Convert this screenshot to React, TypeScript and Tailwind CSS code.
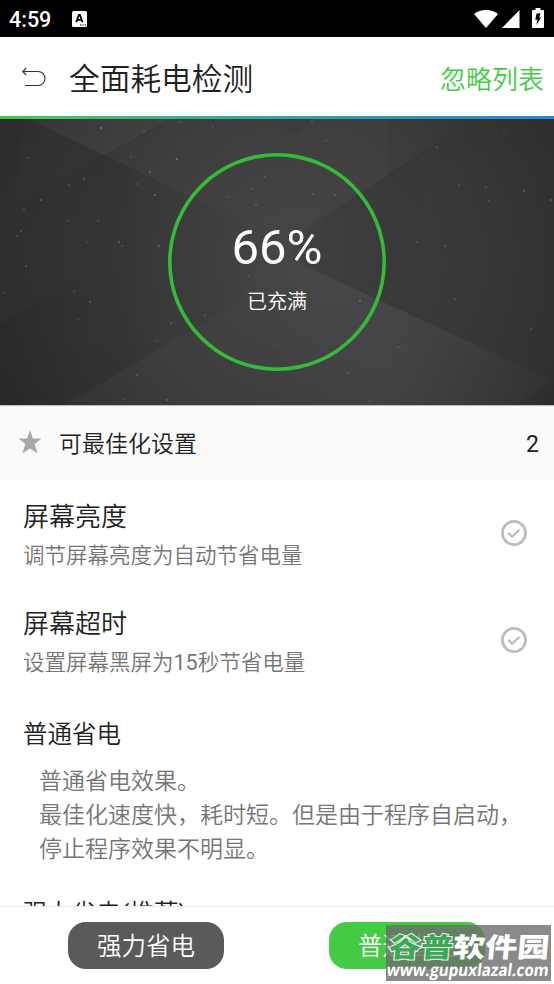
type Setting = {
  id: number;
  title: string;
  description: string;
};

const settings: Setting[] = [
  { id: 1, title: "屏幕亮度", description: "调节屏幕亮度为自动节省电量" },
  { id: 2, title: "屏幕超时", description: "设置屏幕黑屏为15秒节省电量" },
];

// x, y, opacity of the dust specks in the hero background
const specks = [
  [101, 9, 0.5], [177, 40, 0.5], [150, 53, 0.35], [84, 60, 0.35], [155, 76, 0.4],
  [41, 81, 0.4], [24, 91, 0.3], [28, 39, 0.25], [69, 66, 0.25], [131, 38, 0.25],
  [137, 65, 0.25], [119, 123, 0.4], [122, 127, 0.25], [159, 127, 0.4], [21, 112, 0.3],
  [17, 117, 0.25], [98, 102, 0.25], [68, 102, 0.2], [87, 123, 0.2], [26, 147, 0.3],
  [4, 174, 0.2], [74, 172, 0.2], [90, 183, 0.3], [171, 204, 0.3], [157, 222, 0.2],
  [137, 256, 0.3], [167, 281, 0.3], [124, 280, 0.2], [78, 200, 0.2], [249, 157, 0.2],
  [312, 3, 0.3], [326, 22, 0.2], [313, 75, 0.25], [335, 76, 0.35], [360, 182, 0.4],
  [348, 254, 0.3], [398, 228, 0.25], [404, 233, 0.2], [417, 123, 0.25], [445, 127, 0.3],
  [455, 180, 0.25], [524, 72, 0.4], [486, 68, 0.25], [489, 82, 0.25], [459, 66, 0.2],
  [551, 81, 0.3], [437, 28, 0.25], [504, 12, 0.2], [531, 210, 0.25], [252, 70, 0.25],
  [256, 86, 0.3], [265, 58, 0.25], [229, 78, 0.2], [205, 196, 0.25], [277, 226, 0.15],
  [304, 265, 0.2], [370, 282, 0.2], [213, 8, 0.2], [180, 3, 0.25], [144, 12, 0.25],
];

const AndroidStatusBar = () => (
  <div className="flex h-[37px] shrink-0 items-center bg-black pl-[9px] pr-[10px] text-white">
    <span className="pt-[2px] font-[Roboto] text-[21.5px] font-medium leading-[37px]">4:59</span>
    <svg className="ml-[21px]" width="15" height="16" viewBox="0 0 15 16">
      <rect width="15" height="16" rx="1.5" fill="#fff" />
      <path d="M4.2 11.2 6.9 4h1L10.6 11.2M5.3 8.9h4.2" fill="none" stroke="#000" strokeWidth="1.8" />
      <path d="M8 14h1.3M10.3 14h1.3M12.6 14H14" stroke="#000" strokeWidth="1.2" />
    </svg>
    <svg className="ml-auto" width="24" height="18" viewBox="0 0 24 18">
      <path d="M0 4C6.5-1.3 17.5-1.3 24 4L12 18Z" fill="#fff" />
    </svg>
    <svg className="ml-[4px]" width="18" height="18" viewBox="0 0 18 18">
      <path d="M17.5 0v18H0Z" fill="#fff" />
    </svg>
    <svg className="mb-[1px] ml-[12px]" width="12" height="20" viewBox="0 0 12 20">
      <path d="M3.5 0h5v2H11q1 0 1 1v16q0 1-1 1H1q-1 0-1-1V3q0-1 1-1h2.5Z" fill="#fff" />
      <path d="M4.5 5.5h4L7.3 9.5H9L4.5 17l.9-5.2H3.3Z" fill="#000" />
    </svg>
  </div>
);

const HeroBackground = () => (
  <svg
    className="absolute inset-0"
    width="554"
    height="286"
    viewBox="0 0 554 286"
  >
    <defs>
      <radialGradient id="glow" gradientUnits="userSpaceOnUse" cx="300" cy="140" r="320">
        <stop offset="0" stopColor="#464647" />
        <stop offset="0.5" stopColor="#3e3e3f" />
        <stop offset="1" stopColor="#2e2e2f" />
      </radialGradient>
      <linearGradient id="rightShade" x1="0" x2="1">
        <stop offset="0" stopColor="#000" stopOpacity="0.06" />
        <stop offset="0.35" stopColor="#000" stopOpacity="0.12" />
        <stop offset="1" stopColor="#000" stopOpacity="0.05" />
      </linearGradient>
      <linearGradient id="leftShade" gradientUnits="userSpaceOnUse" x1="0" x2="270" y1="0" y2="0">
        <stop offset="0" stopColor="#000" stopOpacity="0.03" />
        <stop offset="0.45" stopColor="#000" stopOpacity="0.12" />
        <stop offset="1" stopColor="#000" stopOpacity="0" />
      </linearGradient>
      <linearGradient id="bottomLight" x1="0" x2="1" y1="0" y2="0">
        <stop offset="0" stopColor="#b0c0e0" stopOpacity="0" />
        <stop offset="0.4" stopColor="#b0c0e0" stopOpacity="0.035" />
        <stop offset="1" stopColor="#b0c0e0" stopOpacity="0" />
      </linearGradient>
      <linearGradient id="lowerFold" gradientUnits="userSpaceOnUse" x1="0" x2="100" y1="0" y2="0">
        <stop offset="0" stopColor="#000" stopOpacity="0.08" />
        <stop offset="1" stopColor="#000" stopOpacity="0" />
      </linearGradient>
    </defs>
    <rect width="554" height="286" fill="url(#glow)" />
    <path d="M28 0 270 115 240 182 65 286H0V0Z" fill="url(#leftShade)" />
    <path d="M28 0H170L103 36Z" fill="#fff" opacity="0.03" />
    <path d="M0 95 103 36 28 0H24L14 86Z" fill="#fff" opacity="0.012" />
    <path d="M0 205 95 150V230L65 286H0Z" fill="url(#lowerFold)" />
    <path d="M475 0 310 106 290 140 554 262V0Z" fill="url(#rightShade)" />
    <path d="M387 0H475L388 58Z" fill="#000" opacity="0.04" />
    <path d="M275 0H312L292 18Z" fill="#000" opacity="0.05" />
    <path d="M290 140 554 262V286H270Z" fill="url(#bottomLight)" />
    <path d="M515 286 554 261V286Z" fill="#000" opacity="0.07" />
    {specks.map(([x, y, opacity], idx) => (
      <circle key={idx} cx={x} cy={y} r="0.9" fill="#fff" opacity={opacity * 0.65} />
    ))}
  </svg>
);

const CheckCircle = () => (
  <svg className="mb-[2px]" width="26" height="26" viewBox="0 0 26 26" fill="none" stroke="#bcbcbc">
    <circle cx="13" cy="13" r="11.6" strokeWidth="2.7" />
    <path d="m7.4 12.8 3.7 4 7.4-7.1" strokeWidth="2.2" />
  </svg>
);

const Watermark = () => (
  <div className="absolute left-[386px] top-[18px] h-14 w-[165px] bg-[#6d6d6d]/80">
    <svg width="165" height="56" viewBox="0 0 165 56">
      <g
        fontFamily="'Noto Sans CJK SC', sans-serif"
        fontSize="27"
        fontWeight="900"
        transform="translate(2 32) skewX(-5) scale(1.19 1)"
      >
        <text fill="#3fa757" stroke="#e4f5e6" strokeWidth="2" paintOrder="stroke">
          谷普
        </text>
        <text x="54" fill="#fff">
          软件园
        </text>
      </g>
      <text
        transform="translate(0 51) skewX(-8)"
        textLength="162"
        lengthAdjust="spacingAndGlyphs"
        fontFamily="'Open Sans', sans-serif"
        fontSize="17"
        fontWeight="700"
        fill="#fff"
      >
        www.gupuxlazal.com
      </text>
    </svg>
  </div>
);

const App = () => {
  return (
    <div className="flex h-[984px] w-[554px] flex-col overflow-hidden bg-white font-[Roboto,'Noto_Sans_CJK_SC_DemiLight','Noto_Sans_CJK_SC',sans-serif] text-[#212121]">
      <AndroidStatusBar />

      {/* Title bar */}
      <header className="flex h-[79px] shrink-0 items-center pl-[22px] pr-[10px]">
        <svg width="24" height="20" viewBox="0 0 24 20" fill="none" stroke="#333" strokeWidth="1.1">
          <path d="M.7 4.5H16a7 7 0 0 1 0 14H3M4.2 1 .7 4.5 4.2 8" />
        </svg>
        <h1 className="ml-[23px] pt-[7px] text-[30.7px] leading-[40px]">全面耗电检测</h1>
        <button className="ml-auto pt-[6px] text-[26px] leading-[40px] text-[#43cc43]">忽略列表</button>
      </header>
      <div className="h-[3px] shrink-0 bg-linear-to-r from-[#43cc43] to-[#1f87e0]" />

      {/* Battery level */}
      <section className="relative h-[286px] shrink-0 px-[168px] pt-[34px] text-white">
        <HeroBackground />
        <div className="relative flex h-[218px] w-[218px] flex-col items-center rounded-full shadow-[inset_0_0_0_3.6px_#34bb38] pt-[63px]">
          <p className="text-[49px] leading-[64px]">66%</p>
          <p className="mt-[6px] text-[20px] leading-[32px]">已充满</p>
        </div>
      </section>

      <main className="min-h-0 flex-1 overflow-hidden">
        <div className="flex h-[75px] items-center border-t border-[#bdb9b9] bg-[#fafafa] pl-[18px] pr-[15px]">
          <svg className="mb-[2px]" width="24" height="24" viewBox="0 0 24 24" fill="#a8a8a8">
            <path d="m12 0 2.9 8.4H23.5l-6.8 5.7 2.8 9.2-7.5-4.8-7.5 4.8 2.8-9.2L.5 8.4h8.6Z" />
          </svg>
          <h2 className="ml-[17px] pt-[4px] text-[23px]">可最佳化设置</h2>
          <span className="ml-auto pt-[4px] text-[23px]">2</span>
        </div>

        <ul>
          {settings.map((setting) => (
            <li key={setting.id} className="flex h-[107px] items-center justify-between pl-[23px] pr-[27px]">
              <div className="pt-[5px]">
                <h3 className="text-[26px] leading-[40px]">{setting.title}</h3>
                <p className="text-[21.5px] leading-[38px] text-[#757575]">{setting.description}</p>
              </div>
              <CheckCircle />
            </li>
          ))}
        </ul>

        <div className="pl-[23px] pt-[21px]">
          <h3 className="text-[24.5px] leading-[40px]">普通省电</h3>
          <p className="ml-[16px] mt-[10px] whitespace-nowrap text-[23px] leading-[34px] text-[#757575]">
            普通省电效果。
            <br />
            最佳化速度快，耗时短。但是由于程序自启动，
            <br />
            停止程序效果不明显。
          </p>
          <h3 className="mt-[27px] text-[24.5px] leading-[40px]">强力省电(推荐)</h3>
        </div>
      </main>

      <footer className="relative flex h-[78px] shrink-0 border-t border-[#eeeeee] pl-[68px] pt-[15px] text-white">
        <button className="h-[47px] w-[156px] rounded-[18px] bg-[#5a5a5a] pt-[3px] text-[24.5px]">强力省电</button>
        <button className="ml-[105px] h-[47px] w-[156px] rounded-[18px] bg-[#43cc43] pt-[3px] text-[24.5px]">普通省电</button>
        <Watermark />
      </footer>
    </div>
  );
};

export default App;
